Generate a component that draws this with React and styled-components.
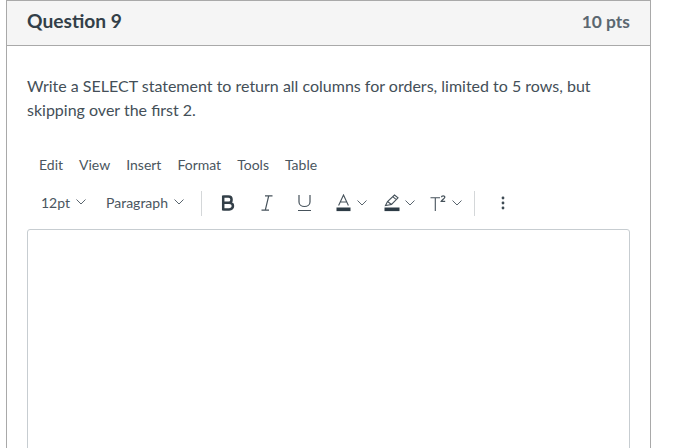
import React from "react";
import styled, { createGlobalStyle } from "styled-components";

const Global = createGlobalStyle`
  html, body { margin: 0; padding: 0; height: 448px; overflow: hidden; background: #fff; }
  body { font-family: Lato, "Open Sans", sans-serif; color: #2d3b45; }
`;
const Page = styled.div`
  height: 448px;
  overflow: hidden;
  padding-left: 6px;
`;
const Card = styled.section`
  width: 645px;
  height: 470px;
  box-sizing: border-box;
  border: 1px solid #a9a9a9;
  border-bottom: none;
`;
const Header = styled.header`
  height: 45px;
  box-sizing: border-box;
  background: #f5f5f5;
  border-bottom: 1px solid #a9a9a9;
  display: flex;
  align-items: center;
  justify-content: space-between;
  padding: 0 20px 4px 20px;
`;
const Title = styled.h2`
  margin: -2px 0 0;
  font-size: 19.2px;
  font-weight: 700;
  color: #333f48;
`;
const Points = styled.span`
  font-size: 17.4px;
  font-weight: 700;
  color: #5b6770;
`;
const Body = styled.div`
  padding: 28px 20px 0;
`;
const Prompt = styled.p`
  margin: 0 0 32px;
  font-size: 16px;
  line-height: 24px;
  color: #444f58;
`;
const MenuBar = styled.nav`
  display: flex;
  gap: 16px;
  padding-left: 12px;
  height: 20px;
  align-items: center;
  font-size: 14px;
  color: #4a5660;
`;
const ToolBar = styled.div`
  display: flex;
  align-items: center;
  height: 28px;
  margin-top: 14px;
  color: #46525b;
`;
const Select = styled.span`
  display: inline-flex;
  align-items: center;
  gap: 6px;
  font-size: 14px;
  color: #4a5660;
  margin-left: ${p => p.$ml}px;
`;
const Divider = styled.span`
  width: 1px;
  height: 25px;
  background: #d4d7d9;
  margin-left: ${p => p.$ml}px;
  margin-top: 2px;
`;
const IconSlot = styled.span`
  display: inline-flex;
  align-items: center;
  margin-left: ${p => p.$ml}px;
  margin-top: 2px;
`;
const Editor = styled.div`
  margin-top: 13px;
  height: 260px;
  border: 1px solid #c7cdd1;
  border-radius: 3px;
`;

const Chevron = () => (
  <svg width="10" height="6" viewBox="0 0 10 6" fill="none" stroke="#5a656e" strokeWidth="1">
    <path d="M0.5 0.5 L5 5 L9.5 0.5" />
  </svg>
);
const Bold = () => (
  <svg width="14" height="16" viewBox="0 0 14 16" fill="none" stroke="#333f48" strokeWidth="2.5">
    <path d="M2.2 1.6 H7.5 C11.6 1.6 11.6 7.8 7.5 7.8 H2.2 M2.2 7.8 H8.2 C13.2 7.8 13.2 14.4 8.2 14.4 H2.2 M2.2 0.4 V15.6" />
  </svg>
);
const Italic = () => (
  <svg width="12" height="16" viewBox="0 0 12 16" fill="none" stroke="#46525b" strokeWidth="1.2">
    <path d="M4 0.8 H11.5 M0.5 15.2 H8 M7.7 0.8 L4.3 15.2" />
  </svg>
);
const Underline = () => (
  <svg width="15" height="16" viewBox="0 0 15 16" fill="none" stroke="#46525b" strokeWidth="1.2">
    <path d="M2 0 V7 C2 13 13 13 13 7 V0 M1 15.5 H14" />
  </svg>
);
const TextColor = () => (
  <svg width="15" height="18" viewBox="0 0 15 18" fill="none" stroke="#46525b" strokeWidth="1.1">
    <path d="M2.6 11.5 L7.5 1 L12.4 11.5 M4.2 8 H10.8" />
    <rect x="0.5" y="13.5" width="14" height="3.6" fill="#2d3b45" stroke="none" />
  </svg>
);
const Highlight = () => (
  <svg width="16" height="18" viewBox="0 0 16 18" fill="none" stroke="#46525b" strokeWidth="1.1">
    <path d="M1.5 11.5 L3.5 7.5 L10.5 1 L14 3.8 L7.5 10.5 Z M3.5 7.5 L7.5 10.5 M9 2.8 L12.3 5.6" />
    <rect x="0.5" y="13.5" width="15" height="3.6" fill="#2d3b45" stroke="none" />
  </svg>
);
const Superscript = () => (
  <svg width="16" height="16" viewBox="0 0 16 16" fill="none" stroke="#46525b" strokeWidth="1.1">
    <path d="M0.5 2.7 H10 M5.3 2.7 V16" />
    <path d="M11.4 2.2 C11.6 0.4 15 0.4 14.8 2.2 C14.7 3.4 12.2 4.8 11.3 6.4 H15.2" strokeWidth="1.3" />
  </svg>
);
const Dots = () => (
  <svg width="4" height="14" viewBox="0 0 4 14" fill="#3f4b54">
    <circle cx="2" cy="2" r="1.4" />
    <circle cx="2" cy="7" r="1.4" />
    <circle cx="2" cy="12" r="1.4" />
  </svg>
);

export default function App() {
  return (
    <Page>
      <Global />
      <Card>
        <Header>
          <Title>Question 9</Title>
          <Points>10 pts</Points>
        </Header>
        <Body>
          <Prompt>
            Write a SELECT statement to return all columns for orders, limited to 5 rows, but
            <br />
            skipping over the first 2.
          </Prompt>
          <MenuBar>
            <span>Edit</span>
            <span>View</span>
            <span>Insert</span>
            <span>Format</span>
            <span>Tools</span>
            <span>Table</span>
          </MenuBar>
          <ToolBar>
            <Select $ml={14}>12pt <Chevron /></Select>
            <Select $ml={20}>Paragraph <Chevron /></Select>
            <Divider $ml={17} />
            <IconSlot $ml={19}><Bold /></IconSlot>
            <IconSlot $ml={26}><Italic /></IconSlot>
            <IconSlot $ml={24}><Underline /></IconSlot>
            <IconSlot $ml={24}><TextColor /></IconSlot>
            <IconSlot $ml={6}><Chevron /></IconSlot>
            <IconSlot $ml={17}><Highlight /></IconSlot>
            <IconSlot $ml={5}><Chevron /></IconSlot>
            <IconSlot $ml={15}><Superscript /></IconSlot>
            <IconSlot $ml={6}><Chevron /></IconSlot>
            <Divider $ml={12} />
            <IconSlot $ml={26}><Dots /></IconSlot>
          </ToolBar>
          <Editor />
        </Body>
      </Card>
    </Page>
  );
}
